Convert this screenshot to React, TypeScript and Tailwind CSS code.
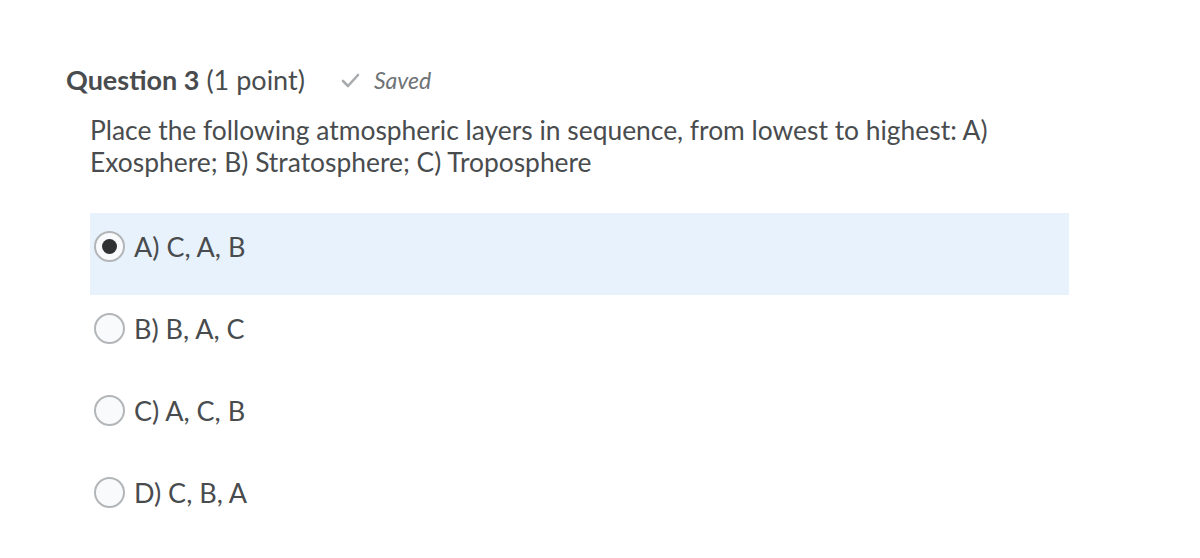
const options = [
  { id: "a", label: "A) C, A, B", checked: true },
  { id: "b", label: "B) B, A, C", checked: false },
  { id: "c", label: "C) A, C, B", checked: false },
  { id: "d", label: "D) C, B, A", checked: false },
];

function Radio({ checked }: { checked: boolean }) {
  return (
    <span className="flex h-[31px] w-[31px] shrink-0 items-center justify-center rounded-full border-2 border-[#b3b6b8] bg-[#f9fafb]">
      {checked && <span className="h-[15px] w-[15px] rounded-full bg-[#2f3133]" />}
    </span>
  );
}

export default function App() {
  return (
    <div className="h-[558px] w-[1200px] bg-white font-['Lato',sans-serif] text-[#494c4e]">
      <div className="pl-[66px] pt-[62px]">
        <div className="flex items-center">
          <h2 className="text-[27px] leading-[36px]">
            <span className="font-bold">Question 3</span> (1 point)
          </h2>
          <span className="ml-[36px] flex items-center gap-[14px] text-[23px] italic text-[#6e7376]">
            <svg width="19" height="15" viewBox="0 0 19 15" fill="none">
              <path d="M2 8l5 5L17 2" stroke="#a9acae" strokeWidth="2.6" strokeLinecap="round" strokeLinejoin="round" />
            </svg>
            Saved
          </span>
        </div>
        <p className="mt-[16px] w-[960px] pl-[24px] text-[26.4px] leading-[32px]">
          Place the following atmospheric layers in sequence, from lowest to highest: A) Exosphere; B) Stratosphere; C) Troposphere
        </p>
        <div className="mt-[35px] ml-[24px] w-[979px]">
          {options.map((o) => (
            <label
              key={o.id}
              className={`flex h-[82px] items-start gap-[9px] pl-[4px] pt-[18px] text-[27px] leading-[32px] ${o.checked ? "bg-[#e8f2fc]" : ""}`}
            >
              <Radio checked={o.checked} />
              <span>{o.label}</span>
            </label>
          ))}
        </div>
      </div>
    </div>
  );
}
